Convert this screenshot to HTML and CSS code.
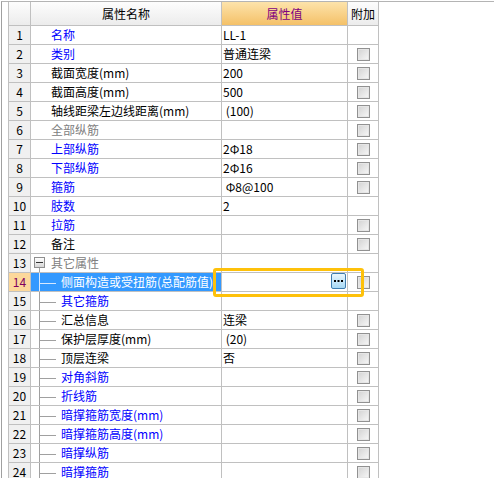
FILE: index.html
```html
<!DOCTYPE html>
<html lang="zh">
<head>
<meta charset="utf-8">
<title>属性编辑</title>
<link rel="stylesheet" href="styles.css">
</head>
<body>
<div class="frame">
  <div class="grid">
    <div class="c h"></div>
    <div class="c h">属性名称</div>
    <div class="c h hv">属性值</div>
    <div class="c h">附加</div>

    <div class="c num">1</div><div class="c name blue">名称</div><div class="c val">LL-1</div><div class="c add"></div>
    <div class="c num">2</div><div class="c name blue">类别</div><div class="c val">普通连梁</div><div class="c add"><span class="cb"></span></div>
    <div class="c num">3</div><div class="c name">截面宽度(mm)</div><div class="c val">200</div><div class="c add"><span class="cb"></span></div>
    <div class="c num">4</div><div class="c name">截面高度(mm)</div><div class="c val">500</div><div class="c add"><span class="cb"></span></div>
    <div class="c num">5</div><div class="c name">轴线距梁左边线距离(mm)</div><div class="c val">&nbsp;(100)</div><div class="c add"><span class="cb"></span></div>
    <div class="c num">6</div><div class="c name gray">全部纵筋</div><div class="c val"></div><div class="c add"><span class="cb"></span></div>
    <div class="c num">7</div><div class="c name blue">上部纵筋</div><div class="c val">2Φ18</div><div class="c add"><span class="cb"></span></div>
    <div class="c num">8</div><div class="c name blue">下部纵筋</div><div class="c val">2Φ16</div><div class="c add"><span class="cb"></span></div>
    <div class="c num">9</div><div class="c name blue">箍筋</div><div class="c val">&nbsp;Φ8@100</div><div class="c add"><span class="cb"></span></div>
    <div class="c num">10</div><div class="c name blue">肢数</div><div class="c val">2</div><div class="c add"></div>
    <div class="c num">11</div><div class="c name blue">拉筋</div><div class="c val"></div><div class="c add"><span class="cb"></span></div>
    <div class="c num">12</div><div class="c name">备注</div><div class="c val"></div><div class="c add"><span class="cb"></span></div>
    <div class="c num">13</div><div class="c name grp gray"><span class="tg"><span class="box"></span></span>其它属性</div><div class="c val"></div><div class="c add"></div>
    <div class="c num cur">14</div><div class="c name child sel"><span class="tw lt"></span>侧面构造或受扭筋(总配筋值)</div><div class="c val edit"><span class="btn"><svg width="13" height="14" viewBox="0 0 13 14"><rect x="2" y="6" width="2" height="2" fill="#000"/><rect x="5.5" y="6" width="2" height="2" fill="#000"/><rect x="9" y="6" width="2" height="2" fill="#000"/></svg></span></div><div class="c add"><span class="cb"></span></div>
    <div class="c num">15</div><div class="c name child blue"><span class="tw"></span>其它箍筋</div><div class="c val"></div><div class="c add"></div>
    <div class="c num">16</div><div class="c name child"><span class="tw"></span>汇总信息</div><div class="c val">连梁</div><div class="c add"><span class="cb"></span></div>
    <div class="c num">17</div><div class="c name child"><span class="tw"></span>保护层厚度(mm)</div><div class="c val">&nbsp;(20)</div><div class="c add"><span class="cb"></span></div>
    <div class="c num">18</div><div class="c name child"><span class="tw"></span>顶层连梁</div><div class="c val">否</div><div class="c add"><span class="cb"></span></div>
    <div class="c num">19</div><div class="c name child blue"><span class="tw"></span>对角斜筋</div><div class="c val"></div><div class="c add"><span class="cb"></span></div>
    <div class="c num">20</div><div class="c name child blue"><span class="tw"></span>折线筋</div><div class="c val"></div><div class="c add"><span class="cb"></span></div>
    <div class="c num">21</div><div class="c name child blue"><span class="tw"></span>暗撑箍筋宽度(mm)</div><div class="c val"></div><div class="c add"><span class="cb"></span></div>
    <div class="c num">22</div><div class="c name child blue"><span class="tw"></span>暗撑箍筋高度(mm)</div><div class="c val"></div><div class="c add"><span class="cb"></span></div>
    <div class="c num">23</div><div class="c name child blue"><span class="tw"></span>暗撑纵筋</div><div class="c val"></div><div class="c add"><span class="cb"></span></div>
    <div class="c num">24</div><div class="c name child blue"><span class="tw"></span>暗撑箍筋</div><div class="c val"></div><div class="c add"><span class="cb"></span></div>

    <div class="focus"></div>
  </div>
</div>
</body>
</html>
```
FILE: styles.css
```css
html, body {
  margin: 0;
  height: 100%;
  overflow: hidden;
  background: #fff;
}
body {
  font-family: "Noto Sans CJK SC", "Liberation Sans", sans-serif;
  font-size: 12px;
  color: #000;
}
.frame {
  margin: 1px 0 0 1px;
  border-top: 1px solid #b4b4b4;
  border-left: 1px solid #a0a0a0;
  padding-left: 6px;
  height: calc(100% - 2px);
}
.grid {
  position: relative;
  display: grid;
  grid-template-columns: 22px 191px 126px 31px;
  grid-template-rows: 24px;
  grid-auto-rows: 19px;
  justify-content: start;
  border-left: 1px solid #c0c0c0;
}
.c {
  border-right: 1px solid #c0c0c0;
  border-bottom: 1px solid #c0c0c0;
  display: flex;
  align-items: center;
  overflow: hidden;
  white-space: nowrap;
  line-height: 18px;
}
.h {
  justify-content: center;
  background: linear-gradient(#fdfdfd, #ececec);
}
.h.hv {
  background: linear-gradient(#fde3ab, #f4c168);
  color: #800080;
}
.num {
  justify-content: center;
  background: #f0f0f0;
}
.num.cur {
  background: #fcd89b;
  color: #800060;
}
.name { padding-left: 20px; }
.name.child, .name.grp { padding-left: 0; }
.val { padding-left: 1px; }
.add { justify-content: center; }
.blue { color: #0000ff; }
.gray { color: #808080; }
.sel {
  background: #3399ff;
  color: #fff;
}
.tw {
  flex: none;
  width: 30px;
  align-self: stretch;
  background:
    linear-gradient(#a0a0a0, #a0a0a0) 8px 0 / 1px 100% no-repeat,
    linear-gradient(#a0a0a0, #a0a0a0) 9px 10px / 16px 1px no-repeat;
}
.tw.lt {
  background:
    linear-gradient(#d6e8ff, #d6e8ff) 8px 0 / 1px 100% no-repeat,
    linear-gradient(#d6e8ff, #d6e8ff) 9px 10px / 16px 1px no-repeat;
}
.tg {
  flex: none;
  width: 20px;
  align-self: stretch;
  display: flex;
  align-items: flex-start;
  background: linear-gradient(#a0a0a0, #a0a0a0) 8px 14px / 1px 100% no-repeat;
}
.box {
  position: relative;
  margin: 3px 0 0 3px;
  width: 11px;
  height: 11px;
  box-sizing: border-box;
  border: 1px solid #8f8f8f;
  background: linear-gradient(#ffffff, #d6d6d6);
}
.box::after {
  content: "";
  position: absolute;
  left: 1px;
  top: 4px;
  width: 7px;
  height: 1px;
  background: #333;
}
.cb {
  width: 13px;
  height: 13px;
  box-sizing: border-box;
  border: 1px solid #919191;
  box-shadow: inset 0 0 0 1px #e6e6e6;
  background: linear-gradient(135deg, #d2d2d2, #f8f8f8);
}
.edit {
  background: #fff;
  justify-content: flex-end;
  align-items: flex-start;
  padding-right: 1px;
}
.btn {
  width: 15px;
  height: 16px;
  box-sizing: border-box;
  border: 1px solid #3f7db0;
  border-radius: 2px;
  background: linear-gradient(#eaf6fd, #a8d9f5);
  display: flex;
}
.btn svg { display: block; }
.focus {
  position: absolute;
  left: 204px;
  top: 266px;
  width: 151px;
  height: 29px;
  box-sizing: border-box;
  border: 3px solid #fec10a;
  border-radius: 3px;
  pointer-events: none;
}
```
